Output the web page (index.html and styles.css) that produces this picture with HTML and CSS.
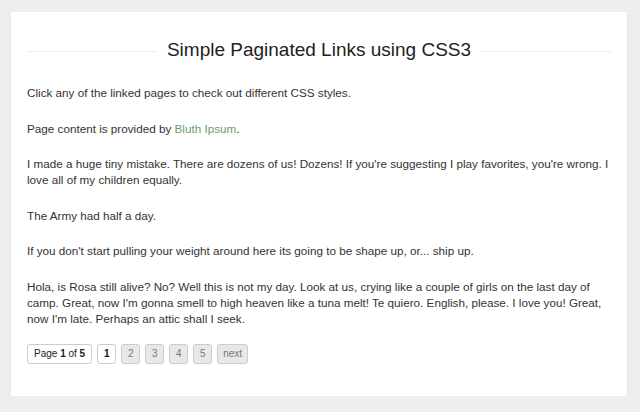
FILE: index.html
```html
<!DOCTYPE html>
<html>
<head>
<meta charset="utf-8">
<link rel="stylesheet" href="styles.css">
</head>
<body>
<div class="card">
  <h1 class="title"><span class="line"></span><span class="title-text">Simple Paginated Links using CSS3</span><span class="line"></span></h1>
  <p>Click any of the linked pages to check out different CSS styles.</p>
  <p>Page content is provided by <a href="#" class="link">Bluth Ipsum</a>.</p>
  <p>I made a huge tiny mistake. There are dozens of us! Dozens! If you're suggesting I play favorites, you're wrong. I love all of my children equally.</p>
  <p>The Army had half a day.</p>
  <p>If you don't start pulling your weight around here its going to be shape up, or... ship up.</p>
  <p>Hola, is Rosa still alive? No? Well this is not my day. Look at us, crying like a couple of girls on the last day of camp. Great, now I'm gonna smell to high heaven like a tuna melt! Te quiero. English, please. I love you! Great, now I'm late. Perhaps an attic shall I seek.</p>
  <div class="pager">
    <span class="pg info">Page <b>1</b> of <b>5</b></span>
    <span class="pg current">1</span>
    <a href="#" class="pg">2</a>
    <a href="#" class="pg">3</a>
    <a href="#" class="pg">4</a>
    <a href="#" class="pg">5</a>
    <a href="#" class="pg">next</a>
  </div>
</div>
</body>
</html>
```
FILE: styles.css
```css
html, body {
  margin: 0;
  padding: 0;
  background: #eeeeee;
}
body {
  padding: 12px 13px 0 11px;
  font-family: "Liberation Sans", Arial, sans-serif;
  color: #333;
}
.card {
  background: #fff;
  height: 384px;
  box-sizing: border-box;
  padding: 22px 16px 0 16px;
  box-shadow: 0 1px 2px rgba(0,0,0,0.08);
}
.title {
  display: flex;
  align-items: center;
  gap: 10px;
  margin: 0 0 19px 0;
  font-weight: normal;
  font-size: 19px;
  line-height: 32px;
  color: #222;
}
.title .line {
  flex: 1;
  height: 1px;
  background: #eee;
  margin-top: 2px;
}
.title-text {
  white-space: nowrap;
}
p {
  font-size: 11.7px;
  line-height: 16px;
  margin: 0 0 19.5px 0;
}
.link {
  color: #6aa06a;
  text-decoration: none;
}
.pager {
  display: flex;
  gap: 5px;
  margin-top: -2px;
}
.pg {
  display: inline-block;
  font-size: 10px;
  line-height: 16px;
  padding: 1px 5px;
  border: 1px solid #ccc;
  border-radius: 3px;
  background: #e8e8e8;
  color: #777;
  text-decoration: none;
  min-width: 7px;
  text-align: center;
}
.pg.info {
  background: #fff;
  color: #222;
  padding: 1px 6px;
}
.pg.current {
  background: #fff;
  color: #111;
  font-weight: bold;
}
```
